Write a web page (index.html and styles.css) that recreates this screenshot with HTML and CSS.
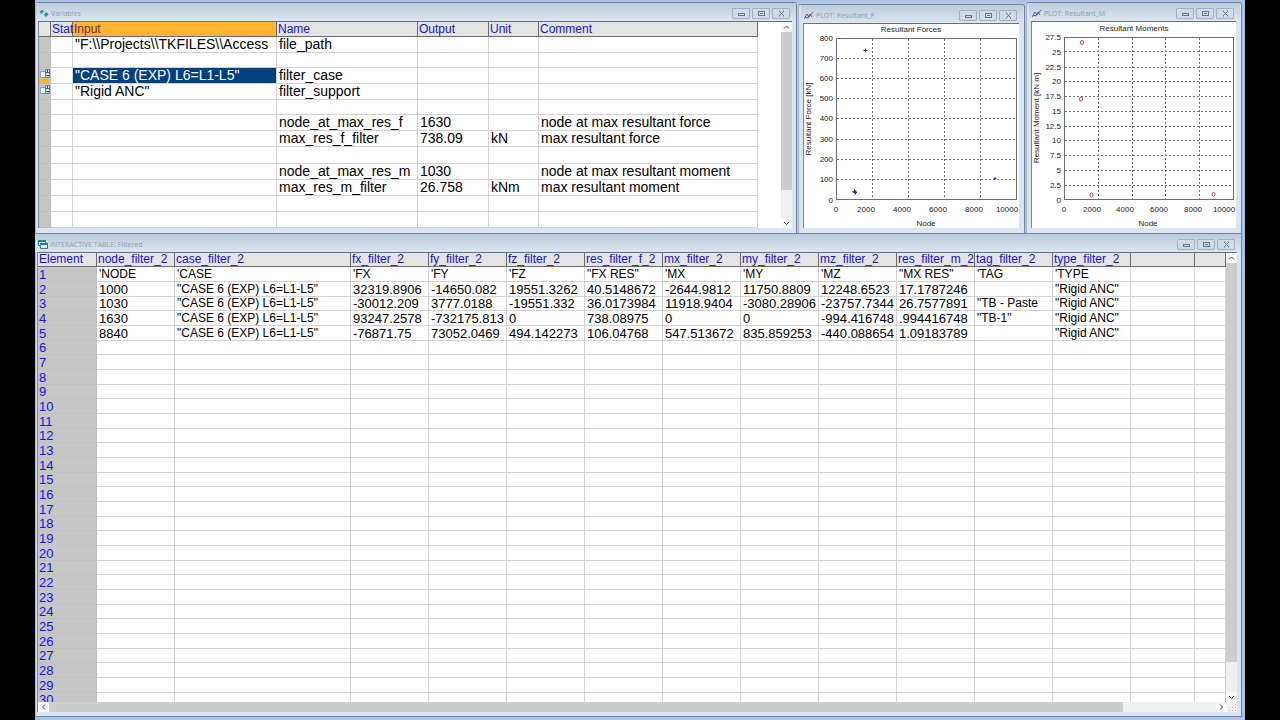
FILE: index.html
```html
<!DOCTYPE html>
<html lang="en">
<head>
    <meta charset="UTF-8">
    <meta name="viewport" content="width=device-width, initial-scale=1.0">
    <title>Filtered</title>
    <link rel="stylesheet" href="styles.css">
</head>
<body>
    <main class="desktop">
        <div class="top">
            <!-- Variables -->
            <section class="window">
                <header class="title-bar">
                    <svg class="title-icon" viewBox="0 0 10 9"><path d="M2.500 1l2 2-2 2-2-2zM7 3.500l2.200 2.200-2.200 2.200-2.200-2.200z" fill="#1f9c95"/><path d="M2.500 1l2 2M7 3.500l2.200 2.200" stroke="#33605f" fill="none"/></svg>
                    <h2>Variables</h2>
                    <div class="controls">
                        <button aria-label="Minimize"><svg viewBox="0 0 9 7"><rect x="1.500" y="3.500" width="6" height="2"/></svg></button>
                        <button aria-label="Maximize"><svg viewBox="0 0 9 7"><rect x="1.500" y="1.500" width="6" height="4"/><path d="M3 3.500h3"/></svg></button>
                        <button aria-label="Close"><svg viewBox="0 0 9 7"><path d="M2 1l5 5M7 1l-5 5M2 1h1M6 1h1M2 6h1M6 6h1"/></svg></button>
                    </div>
                </header>
                <div class="content scroll-y">
                    <div class="sheet">
                        <table class="variables">
                            <colgroup><col class="w-gutter"><col class="w-stat"><col class="w-input"><col class="w-name"><col class="w-output"><col class="w-unit"><col class="w-comment"></colgroup>
                            <thead>
                                <tr><th></th><th>Stat</th><th class="current">Input</th><th>Name</th><th>Output</th><th>Unit</th><th>Comment</th></tr>
                            </thead>
                            <tbody>
                                <tr><td></td><td></td><td>"F:\\Projects\\TKFILES\\Access</td><td>file_path</td><td></td><td></td><td></td></tr>
                                <tr class="gap"><td></td><td></td><td></td><td></td><td></td><td></td><td></td></tr>
                                <tr>
                                    <td class="active"><svg class="list-icon" viewBox="0 0 10 10"><path d="M.5 2.500h5v6h-5z" fill="#eef3f8" stroke="#8ea3bb"/><path d="M5.500.500h4v8h-4z" fill="#dbe5ef" stroke="#5f7c9c"/><path d="M6 3.500h3M6 6.500h3M7.500 1v2" stroke="#345a84"/></svg></td>
                                    <td></td><td class="selected">"CASE 6 (EXP) L6=L1-L5"</td><td>filter_case</td><td></td><td></td><td></td>
                                </tr>
                                <tr>
                                    <td><svg class="list-icon" viewBox="0 0 10 10"><path d="M.5 2.500h5v6h-5z" fill="#eef3f8" stroke="#8ea3bb"/><path d="M5.500.500h4v8h-4z" fill="#dbe5ef" stroke="#5f7c9c"/><path d="M6 3.500h3M6 6.500h3M7.500 1v2" stroke="#345a84"/></svg></td>
                                    <td></td><td>"Rigid ANC"</td><td>filter_support</td><td></td><td></td><td></td>
                                </tr>
                                <tr class="gap"><td></td><td></td><td></td><td></td><td></td><td></td><td></td></tr>
                                <tr><td></td><td></td><td></td><td>node_at_max_res_f</td><td>1630</td><td></td><td>node at max resultant force</td></tr>
                                <tr><td></td><td></td><td></td><td>max_res_f_filter</td><td>738.09</td><td>kN</td><td>max resultant force</td></tr>
                                <tr class="wide-gap"><td></td><td></td><td></td><td></td><td></td><td></td><td></td></tr>
                                <tr><td></td><td></td><td></td><td>node_at_max_res_m</td><td>1030</td><td></td><td>node at max resultant moment</td></tr>
                                <tr><td></td><td></td><td></td><td>max_res_m_filter</td><td>26.758</td><td>kNm</td><td>max resultant moment</td></tr>
                                <tr><td></td><td></td><td></td><td></td><td></td><td></td><td></td></tr>
                                <tr><td></td><td></td><td></td><td></td><td></td><td></td><td></td></tr>
                            </tbody>
                        </table>
                    </div>
                    <div class="vbar">
                        <button aria-label="Scroll up"><svg viewBox="0 0 11 10"><path d="M3 6.500l2.500-2.500 2.500 2.500"/></svg></button>
                        <div class="track"><div class="thumb thumb-variables"></div></div>
                        <button aria-label="Scroll down"><svg viewBox="0 0 11 10"><path d="M3 4l2.500 2.500 2.500-2.500"/></svg></button>
                    </div>
                </div>
            </section>

            <!-- Plot: forces -->
            <section class="window window-plot window-low">
                <header class="title-bar">
                    <svg class="title-icon" viewBox="0 0 10 9"><path d="M0 8l3-5 2 3 4-5" fill="none" stroke="#9a4a5c"/><path d="M1 6l3 1 2-4 2 3" fill="none" stroke="#4a5590"/></svg>
                    <h2>PLOT: Resultant_F</h2>
                    <div class="controls">
                        <button aria-label="Minimize"><svg viewBox="0 0 9 7"><rect x="1.500" y="3.500" width="6" height="2"/></svg></button>
                        <button aria-label="Maximize"><svg viewBox="0 0 9 7"><rect x="1.500" y="1.500" width="6" height="4"/><path d="M3 3.500h3"/></svg></button>
                        <button aria-label="Close"><svg viewBox="0 0 9 7"><path d="M2 1l5 5M7 1l-5 5M2 1h1M6 1h1M2 6h1M6 6h1"/></svg></button>
                    </div>
                </header>
                <div class="content">
                    <svg class="plot" viewBox="0 0 215 204">
                        <text class="mid" x="107" y="8">Resultant Forces</text>
                        <path class="grid" d="M33 34.500h180M33 54.500h180M33 74.500h180M33 94.500h180M33 115.500h180M33 135.500h180M33 155.500h180M68.500 15v160M104.500 15v160M140.500 15v160M176.500 15v160"/>
                        <rect class="frame" x="32.500" y="14.500" width="180" height="161"/>
                        <g class="end">
                            <text x="29" y="17">800</text><text x="29" y="37">700</text><text x="29" y="57">600</text>
                            <text x="29" y="77">500</text><text x="29" y="97">400</text><text x="29" y="118">300</text>
                            <text x="29" y="138">200</text><text x="29" y="158">100</text><text x="29" y="179">0</text>
                        </g>
                        <g class="mid">
                            <text x="32" y="188">0</text><text x="62" y="188">2000</text><text x="98" y="188">4000</text>
                            <text x="134" y="188">6000</text><text x="170" y="188">8000</text><text x="203" y="188">10000</text>
                            <text x="122" y="202">Node</text>
                            <text transform="translate(7 95) rotate(-90)">Resultant Force [kN]</text>
                        </g>
                        <path class="force" d="M59.500 26.500h4M61.500 24.500v4M48.500 167.500h4M50.500 165.500v4M49 168.500h4M51.500 166.500v4M189.500 154.500h3M191 153v3"/>
                    </svg>
                </div>
            </section>

            <!-- Plot: moments -->
            <section class="window window-plot">
                <header class="title-bar">
                    <svg class="title-icon" viewBox="0 0 10 9"><path d="M0 8l3-5 2 3 4-5" fill="none" stroke="#9a4a5c"/><path d="M1 6l3 1 2-4 2 3" fill="none" stroke="#4a5590"/></svg>
                    <h2>PLOT: Resultant_M</h2>
                    <div class="controls">
                        <button aria-label="Minimize"><svg viewBox="0 0 9 7"><rect x="1.500" y="3.500" width="6" height="2"/></svg></button>
                        <button aria-label="Maximize"><svg viewBox="0 0 9 7"><rect x="1.500" y="1.500" width="6" height="4"/><path d="M3 3.500h3"/></svg></button>
                        <button aria-label="Close"><svg viewBox="0 0 9 7"><path d="M2 1l5 5M7 1l-5 5M2 1h1M6 1h1M2 6h1M6 6h1"/></svg></button>
                    </div>
                </header>
                <div class="content">
                    <svg class="plot" viewBox="0 0 204 206">
                        <text class="mid" x="102" y="9">Resultant Moments</text>
                        <path class="grid" d="M33 29.500h169M33 45.500h169M33 59.500h169M33 74.500h169M33 89.500h169M33 104.500h169M33 118.500h169M33 133.500h169M33 148.500h169M33 163.500h169M66.500 16v162M100.500 16v162M133.500 16v162M167.500 16v162"/>
                        <rect class="frame" x="32.500" y="15.500" width="169" height="162"/>
                        <g class="end">
                            <text x="29" y="18">27.5</text><text x="29" y="33">25</text><text x="29" y="48">22.5</text>
                            <text x="29" y="62">20</text><text x="29" y="77">17.5</text><text x="29" y="92">15</text>
                            <text x="29" y="107">12.5</text><text x="29" y="121">10</text><text x="29" y="136">7.5</text>
                            <text x="29" y="151">5</text><text x="29" y="166">2.5</text><text x="29" y="181">0</text>
                        </g>
                        <g class="mid">
                            <text x="32" y="190">0</text><text x="60" y="190">2000</text><text x="93" y="190">4000</text>
                            <text x="127" y="190">6000</text><text x="161" y="190">8000</text><text x="192" y="190">10000</text>
                            <text x="116" y="204">Node</text>
                            <text transform="translate(7 96) rotate(-90)">Resultant Moment [kN m]</text>
                        </g>
                        <g class="moment">
                            <ellipse cx="50" cy="20.500" rx="1.500" ry="2"/>
                            <ellipse cx="49" cy="77" rx="1.500" ry="2"/>
                            <ellipse cx="59.500" cy="173" rx="1.500" ry="2"/>
                            <ellipse cx="181.500" cy="172.500" rx="1.500" ry="2"/>
                        </g>
                    </svg>
                </div>
            </section>
        </div>

        <!-- Interactive table -->
        <section class="window window-table">
            <header class="title-bar">
                <svg class="title-icon" viewBox="0 0 10 9"><path d="M.5.500h7v5h-7z" fill="#fff" stroke="#2381a5"/><path d="M2.500 3.500h7v5h-7z" fill="#fff" stroke="#2381a5"/><path d="M0 1h8M2 4h8" stroke="#2381a5" stroke-width="2"/></svg>
                <h2>INTERACTIVE TABLE: Filtered</h2>
                <div class="controls">
                    <button aria-label="Minimize"><svg viewBox="0 0 9 7"><rect x="1.500" y="3.500" width="6" height="2"/></svg></button>
                    <button aria-label="Maximize"><svg viewBox="0 0 9 7"><rect x="1.500" y="1.500" width="6" height="4"/><path d="M3 3.500h3"/></svg></button>
                    <button aria-label="Close"><svg viewBox="0 0 9 7"><path d="M2 1l5 5M7 1l-5 5M2 1h1M6 1h1M2 6h1M6 6h1"/></svg></button>
                </div>
            </header>
            <div class="content scroll-y">
                <div class="sheet">
                    <table class="filtered">
                        <colgroup><col class="w-element"><col class="w-value"><col class="w-case"><col class="w-value" span="10"><col class="w-spare"><col></colgroup>
                        <thead>
                            <tr><th>Element</th><th>node_filter_2</th><th>case_filter_2</th><th>fx_filter_2</th><th>fy_filter_2</th><th>fz_filter_2</th><th>res_filter_f_2</th><th>mx_filter_2</th><th>my_filter_2</th><th>mz_filter_2</th><th>res_filter_m_2</th><th>tag_filter_2</th><th>type_filter_2</th><th></th><th></th></tr>
                        </thead>
                        <tbody id="rows"></tbody>
                    </table>
                </div>
                <div class="vbar">
                    <button aria-label="Scroll up"><svg viewBox="0 0 11 10"><path d="M3 6.500l2.500-2.500 2.500 2.500"/></svg></button>
                    <div class="track"><div class="thumb thumb-table"></div></div>
                    <button aria-label="Scroll down"><svg viewBox="0 0 11 10"><path d="M3 4l2.500 2.500 2.500-2.500"/></svg></button>
                </div>
            </div>
            <div class="hbar">
                <button aria-label="Scroll left"><svg viewBox="0 0 11 10"><path d="M7 2.500l-2.500 2.500 2.500 2.500"/></svg></button>
                <div class="track"><div class="thumb"></div></div>
                <button aria-label="Scroll right"><svg viewBox="0 0 11 10"><path d="M4 2.500l2.500 2.500-2.500 2.500"/></svg></button>
                <svg class="grip" viewBox="0 0 10 10"><path d="M8 2h1v1h-1zM8 5h1v1h-1zM8 8h1v1h-1zM5 5h1v1h-1zM5 8h1v1h-1zM2 8h1v1h-1z"/></svg>
            </div>
        </section>
    </main>

    <script>
        const data = [
            ["'NODE", "'CASE", "'FX", "'FY", "'FZ", '"FX RES"', "'MX", "'MY", "'MZ", '"MX RES"', "'TAG", "'TYPE"],
            ['1000', '"CASE 6 (EXP) L6=L1-L5"', '32319.8906', '-14650.082', '19551.3262', '40.5148672', '-2644.9812', '11750.8809', '12248.6523', '17.1787246', '', '"Rigid ANC"'],
            ['1030', '"CASE 6 (EXP) L6=L1-L5"', '-30012.209', '3777.0188', '-19551.332', '36.0173984', '11918.9404', '-3080.28906', '-23757.7344', '26.7577891', '"TB - Paste', '"Rigid ANC"'],
            ['1630', '"CASE 6 (EXP) L6=L1-L5"', '93247.2578', '-732175.813', '0', '738.08975', '0', '0', '-994.416748', '.994416748', '"TB-1"', '"Rigid ANC"'],
            ['8840', '"CASE 6 (EXP) L6=L1-L5"', '-76871.75', '73052.0469', '494.142273', '106.04768', '547.513672', '835.859253', '-440.088654', '1.09183789', '', '"Rigid ANC"']
        ];

        const rows = document.getElementById('rows');

        for (let i = 0; i < 30; i++) {
            const tr = rows.insertRow();
            const th = document.createElement('th');
            th.textContent = i + 1;
            tr.appendChild(th);
            for (let c = 0; c < 14; c++) {
                const value = (data[i] && data[i][c]) || '';
                const td = tr.insertCell();
                td.textContent = value;
                if (value && !isNaN(value)) td.className = 'num';
            }
        }
    </script>
</body>
</html>
```
FILE: styles.css
```css
* {
    box-sizing: border-box;
}

body {
    margin: 0;
    background: #000;
    color: #000;
    font-family: "Liberation Sans", Arial, sans-serif;
    font-size: 12px;
}

button {
    padding: 0;
    border: none;
    background: none;
}

svg {
    display: block;
}

.desktop {
    display: flex;
    flex-direction: column;
    height: 100vh;
    margin: 0 35px;
    padding: 2px 3px 3px 0;
    background: #a9c3e8;
    overflow: hidden;
}

.top {
    display: grid;
    grid-template-columns: 762fr 227fr 216fr;
    gap: 1px;
    flex: none;
    height: 231px;
    background: #b9c9df;
}

/* Windows */
.window {
    display: flex;
    flex-direction: column;
    min-width: 0;
    padding: 0 4px 4px 4px;
    background: #dae5f0;
    border: 1px solid #71839f;
    border-left-color: #a3b4cb;
    border-radius: 3px 3px 0 0;
}

.top .window {
    padding-bottom: 5px;
}

.top .window:first-child {
    padding-left: 2px;
}

.top .window-plot {
    padding-right: 5px;
}

.window-low {
    margin-top: 2px;
}

.window-table {
    flex: 1;
    min-height: 0;
    padding-left: 1px;
}

.title-bar {
    display: flex;
    align-items: center;
    flex: none;
    height: 18px;
    margin: 0 -4px 0 -2px;
    padding: 3px 6px 0 3px;
    background: linear-gradient(#bccbdc, #dae5f0);
}

.title-icon {
    width: 10px;
    height: 9px;
    margin-right: 2px;
}

.title-bar h2 {
    flex: 1;
    margin: 0;
    color: #929ca8;
    font: 7px/10px "Open Sans", "Noto Sans", sans-serif;
    white-space: nowrap;
}

.controls {
    display: flex;
    gap: 2px;
}

.controls button {
    width: 18px;
    height: 11px;
    border: 1px solid #9fb0c5;
    border-radius: 1px;
    background: #cfdbe8;
}

.controls svg {
    width: 9px;
    height: 7px;
    margin: 1px auto;
    fill: none;
    stroke: #69747f;
}

.content {
    flex: 1;
    min-height: 0;
    border-top: 1px solid #66717f;
    border-left: 1px solid #7d8896;
    background: #fff;
    overflow: hidden;
}

.scroll-y {
    display: flex;
}

.sheet {
    flex: 1;
    min-width: 0;
    overflow: hidden;
}

/* Scroll bars */
.vbar {
    display: flex;
    flex-direction: column;
    flex: none;
    width: 11px;
    background: #f0f0f0;
}

.vbar button,
.hbar button {
    flex: none;
    width: 11px;
    height: 10px;
    background: #f8f8f8;
}

.vbar svg,
.hbar svg {
    width: 11px;
    height: 10px;
    fill: none;
    stroke: #444;
}

.track {
    flex: 1;
}

.thumb {
    background: #cdcdcd;
}

.thumb-variables {
    height: 85%;
}

.thumb-table {
    height: 93%;
}

.hbar {
    display: flex;
    flex: none;
    height: 10px;
    background: #f0f0f0;
    border-left: 1px solid #7d8896;
}

.hbar .thumb {
    width: 92%;
    height: 100%;
}

.hbar .grip {
    width: 10px;
    fill: #b5b5b5;
    stroke: none;
}

/* Tables */
table {
    table-layout: fixed;
    border-spacing: 0;
}

th,
td {
    padding: 0;
    border-right: 1px solid #d2d2d2;
    border-bottom: 1px solid #d2d2d2;
    text-align: left;
    white-space: nowrap;
}

thead th {
    height: 15px;
    padding-left: 1px;
    border-right-color: #6c6c6c;
    border-bottom-color: #6c6c6c;
    background: #e4e4e4;
    color: #1414c8;
    font-size: 12px;
    font-weight: normal;
    line-height: 14px;
}

.variables {
    width: 719px;
}

.variables td {
    height: 16px;
    padding-left: 2px;
    font-size: 14px;
    line-height: 15px;
}

.variables .gap td {
    height: 15px;
}

.variables .wide-gap td {
    height: 17px;
}

.variables td:first-child {
    padding: 0;
    border-color: #bebebe;
    background: #c6c6c6;
}

.variables .current {
    background: #ffb432;
    color: #6e2850;
}

.variables td.active {
    background: linear-gradient(#c6c6c6 10px, #ffb432 10px);
}

.variables td.selected {
    background: #00407f;
    color: #fff;
}

.list-icon {
    width: 10px;
    height: 10px;
    margin: 0 0 4px 1px;
}

.w-gutter { width: 12px; }
.w-stat { width: 22px; }
.w-input { width: 204px; }
.w-name { width: 141px; }
.w-output { width: 71px; }
.w-unit { width: 50px; }
.w-comment { width: 219px; }

.filtered {
    width: 100%;
}

.filtered thead th {
    height: 14px;
    line-height: 13px;
}

.filtered td,
.filtered tbody th {
    height: 15px;
    padding-left: 2px;
    line-height: 13px;
}

.filtered tbody tr:nth-child(3n) > * {
    height: 14px;
}

.filtered .num {
    font-size: 13px;
}

.filtered tbody th {
    padding-left: 1px;
    border-color: #c0c0c0;
    background: #c6c6c6;
    color: #1414e6;
    font-size: 13px;
    font-weight: normal;
}

.w-element { width: 59px; }
.w-value { width: 78px; }
.w-case { width: 176px; }
.w-spare { width: 64px; }

/* Plots */
.plot {
    width: 100%;
    height: 100%;
    font-size: 8px;
    fill: #222;
}

.mid {
    text-anchor: middle;
}

.end {
    text-anchor: end;
}

.grid {
    fill: none;
    stroke: #6e6e6e;
    stroke-dasharray: 2 2;
}

.frame {
    fill: none;
    stroke: #6e6e6e;
}

.force {
    fill: none;
    stroke: #2828b4;
}

.moment {
    fill: none;
    stroke: #d23c46;
}
```
